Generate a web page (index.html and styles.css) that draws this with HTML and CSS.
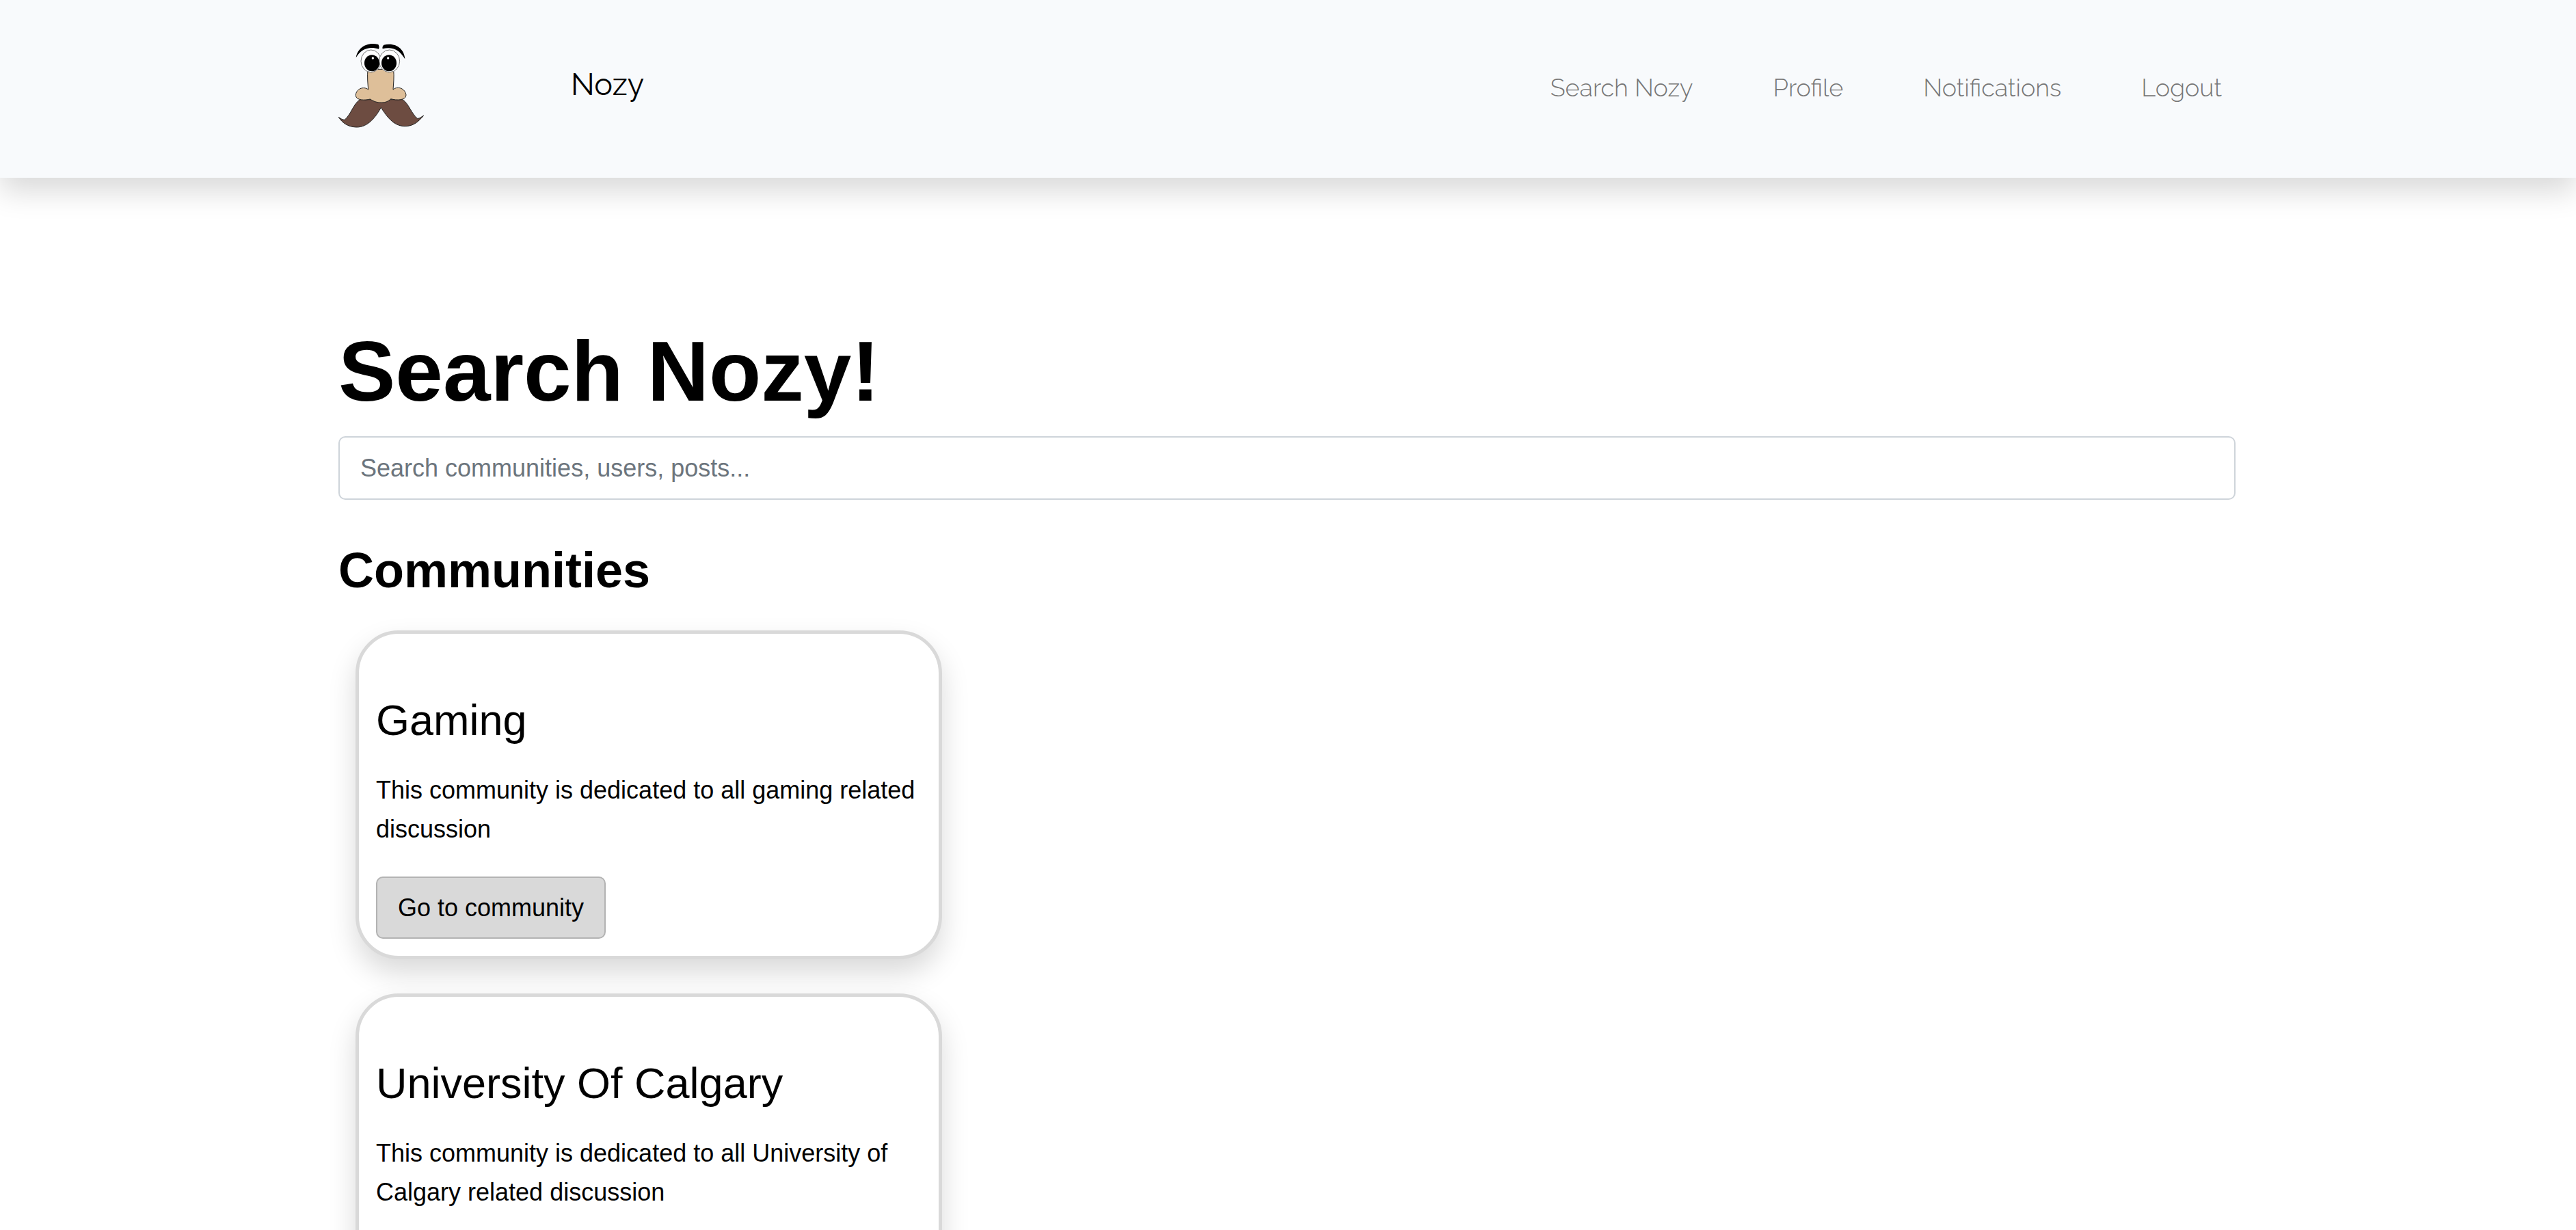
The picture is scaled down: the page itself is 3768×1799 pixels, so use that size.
FILE: index.html
```html
<!DOCTYPE html>
<html lang="en">
<head>
<meta charset="utf-8">
<meta name="viewport" content="width=device-width, initial-scale=1">
<title>Nozy</title>
<link rel="stylesheet" href="styles.css">
</head>
<body>
<header class="navbar">
  <div class="container navbar-inner">
    <a class="logo" href="#" aria-label="Nozy home">
      <svg viewBox="45 40 375 375" aria-hidden="true">
        <g stroke="#222" stroke-width="3" stroke-linejoin="round">
          <path fill="#6d4c41" d="M139 288C112 305 99 355 72 377C62 377 54 370 46 365C61 389 84 407 122 409C178 411 212 358 232 323C256 360 286 405 337 405C375 405 397 384 419 358C409 364 402 371 392 371C365 350 355 307 327 288Z"/>
          <path fill="#debf99" d="M174 155C171 190 174 216 176 244C155 227 121 242 121 270C122 292 162 292 184 286C202 297 214 301 233 301C254 301 264 295 275 285C300 292 342 292 342 268C339 240 305 226 285 244C287 216 290 190 287 155Z"/>
          <ellipse cx="188" cy="119" rx="44" ry="49" fill="#fff" stroke="#777"/>
          <ellipse cx="269" cy="119" rx="45" ry="49" fill="#fff" stroke="#777"/>
        </g>
        <ellipse cx="192" cy="128" rx="33" ry="36"/>
        <ellipse cx="267" cy="128" rx="33" ry="36"/>
        <circle cx="196" cy="106" r="5" fill="#fff"/>
        <circle cx="263" cy="106" r="5" fill="#fff"/>
        <path d="M122 104C127 65 167 32 220 46C224 52 225 60 222 66C179 53 145 66 122 104Z"/>
        <path d="M239 65C237 58 239 53 244 48C295 35 335 65 337 110C314 70 282 54 239 65Z"/>
      </svg>
    </a>
    <a class="brand" href="#">Nozy</a>
    <nav class="links">
      <a href="#">Search Nozy</a>
      <a href="#">Profile</a>
      <a href="#">Notifications</a>
      <a href="#">Logout</a>
    </nav>
  </div>
</header>
<main class="container page">
  <h1>Search Nozy!</h1>
  <input class="search" type="search" placeholder="Search communities, users, posts..." aria-label="Search communities, users, posts">
  <h2>Communities</h2>
  <section class="cards">
    <article class="card">
      <h3>Gaming</h3>
      <p>This community is dedicated to all gaming related discussion</p>
      <button class="btn" type="button">Go to community</button>
    </article>
    <article class="card">
      <h3>University Of Calgary</h3>
      <p>This community is dedicated to all University of Calgary related discussion</p>
      <button class="btn" type="button">Go to community</button>
    </article>
  </section>
</main>
</body>
</html>
```
FILE: styles.css
```css
* { box-sizing: border-box; }

body {
  margin: 0;
  background: #fff;
  color: #000;
  font: 36px/57px "Liberation Sans", Arial, sans-serif;
}

h1, h2, h3, p { margin: 0; }
a { color: inherit; text-decoration: none; }

.container {
  width: 100%;
  max-width: 2778px;
  margin: 0 auto;
  padding-right: 3px;
}

.navbar {
  background: #f8fafc;
  padding: 63px 0 72px;
  box-shadow: 0 20px 40px rgba(0, 0, 0, 0.15);
  font-family: Raleway, Lato, sans-serif;
}
.navbar-inner { display: flex; align-items: center; }
.logo { width: 125px; height: 125px; }
.logo svg { display: block; width: 100%; height: 100%; }
.brand {
  margin-left: 215px;
  padding-bottom: 4px;
  font-size: 45px;
}
.links {
  display: flex;
  gap: 117px;
  margin-left: auto;
  padding: 6px 20px 0 0;
  color: #777;
  font-weight: 300;
}

.page { padding-top: 208px; }

h1 { font-size: 125px; line-height: 150px; }

.search {
  display: block;
  width: 100%;
  height: 93px;
  margin: 20px 0 60px;
  padding: 0 30px;
  border: 2px solid #ced4da;
  border-radius: 10px;
  background: #fff;
  font: inherit;
  appearance: none;
}
.search::placeholder { color: #6c757d; opacity: 1; }

h2 { font-size: 72px; line-height: 86px; }

.cards {
  display: flex;
  flex-direction: column;
  gap: 50px;
  padding: 45px 25px;
}
.card {
  width: 100%;
  max-width: 858px;
  padding: 88px 25px 25px;
  border: 5px solid #d9d9d9;
  border-radius: 63px;
  background: #fff;
  box-shadow: 0 20px 40px rgba(0, 0, 0, 0.15);
}
h3 { font-size: 63px; line-height: 76px; font-weight: 400; }
.card p { margin: 36px 0 41px; }

.btn {
  display: block;
  height: 91px;
  padding: 0 30px;
  border: 2px solid #b3b3b3;
  border-radius: 10px;
  background: #d9d9d9;
  color: #000;
  font: inherit;
  cursor: pointer;
}
```
